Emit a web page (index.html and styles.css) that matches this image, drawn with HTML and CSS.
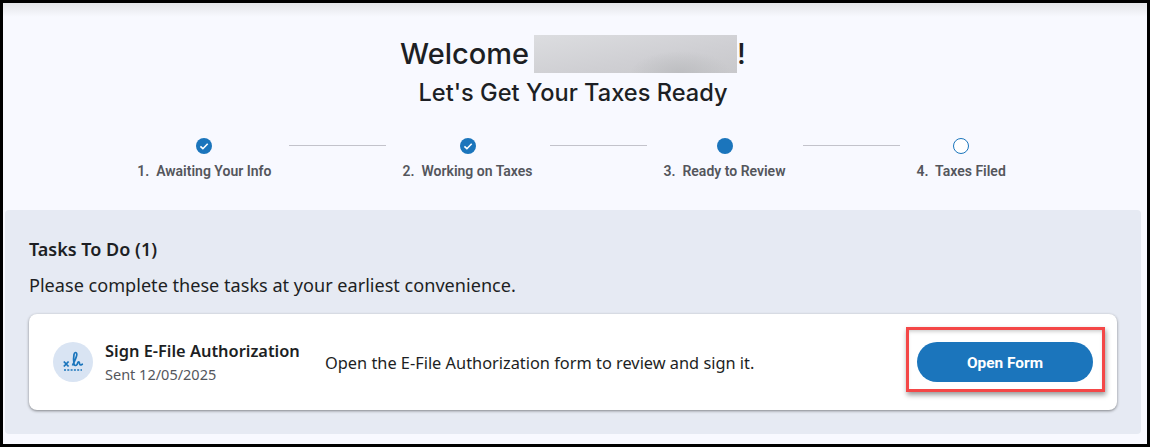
FILE: index.html
```html
<!DOCTYPE html>
<html lang="en">
<head>
    <meta charset="UTF-8">
    <title>Tax Portal</title>
    <link rel="stylesheet" href="styles.css">
</head>
<body>
    <div class="frame">
        <header class="welcome">
            <h1 class="welcome-title">Welcome <span class="name-blur"></span>!</h1>
            <h2 class="welcome-sub">Let's Get Your Taxes Ready</h2>

            <div class="stepper">
                <div class="step">
                    <svg class="step-icon" viewBox="0 0 16 16"><circle cx="8" cy="8" r="8" fill="#1b75bc"/><path d="M4.4 8.3l2.5 2.4 4.8-5" fill="none" stroke="#fff" stroke-width="1.6"/></svg>
                    <span class="step-label">1.&nbsp; Awaiting Your Info</span>
                </div>
                <div class="step-line"></div>
                <div class="step">
                    <svg class="step-icon" viewBox="0 0 16 16"><circle cx="8" cy="8" r="8" fill="#1b75bc"/><path d="M4.4 8.3l2.5 2.4 4.8-5" fill="none" stroke="#fff" stroke-width="1.6"/></svg>
                    <span class="step-label">2.&nbsp; Working on Taxes</span>
                </div>
                <div class="step-line"></div>
                <div class="step">
                    <svg class="step-icon" viewBox="0 0 16 16"><circle cx="8" cy="8" r="8" fill="#1b75bc"/></svg>
                    <span class="step-label">3.&nbsp; Ready to Review</span>
                </div>
                <div class="step-line"></div>
                <div class="step">
                    <svg class="step-icon" viewBox="0 0 16 16"><circle cx="8" cy="8" r="7.5" fill="#fff" stroke="#1b75bc"/></svg>
                    <span class="step-label">4.&nbsp; Taxes Filed</span>
                </div>
            </div>
        </header>

        <section class="tasks">
            <h3 class="tasks-title">Tasks To Do (1)</h3>
            <p class="tasks-note">Please complete these tasks at your earliest convenience.</p>

            <div class="task-card">
                <div class="task-icon">
                    <svg viewBox="0 0 24 24" width="24" height="24">
                        <path d="M2.8 11.500l4.800 5M7.600 11.500l-4.800 5" stroke="#1b75bc" stroke-width="1.800" fill="none"/>
                        <path d="M11.500 15.500C13 12 16 7 15.800 4.300C15.600 1.800 13.500 2 13 4.500C12.500 7 12.500 11 13 14C13.300 15.800 15 16 16 14.500C16.800 13 17 11.500 18 12C19 12.500 18 15 19.500 15C20.500 15 21 14.200 22 14" stroke="#1b75bc" stroke-width="1.700" fill="none"/>
                        <path d="M3 20h18" stroke="#1b75bc" stroke-width="1.600" stroke-dasharray="2 1.300" fill="none"/>
                    </svg>
                </div>
                <div class="task-info">
                    <div class="task-name">Sign E-File Authorization</div>
                    <div class="task-date">Sent 12/05/2025</div>
                </div>
                <p class="task-desc">Open the E-File Authorization form to review and sign it.</p>
                <div class="highlight-box">
                    <button class="form-button" type="button">Open Form</button>
                </div>
            </div>
        </section>
    </div>
</body>
</html>
```

FILE: styles.css
```css
:root {
    --page-bg: #f8f9ff;
    --panel-bg: #e6eaf3;
    --primary-blue: #1b75bc;
    --text-dark: #1d1f24;
    --text-gray: #54565c;
    --line-color: #c3c3cb;
    --red-mark: #f44747;
}
*, *::before, *::after { box-sizing: border-box; }
body { margin: 0; background-color: #000; overflow: hidden; }
.frame {
    height: 447px; border: 3px solid #000; background-color: var(--page-bg);
    display: flex; flex-direction: column;
    font-family: 'Noto Sans', sans-serif; color: var(--text-dark);
}
.welcome {
    height: 207px; flex-shrink: 0;
    background-image: linear-gradient(to bottom, #e4e5e9, var(--page-bg) 14px);
    display: flex; flex-direction: column; align-items: center;
    padding-top: 31px; padding-right: 4px;
}
.welcome-title { margin: 0; font-family: 'Inter', sans-serif; font-size: 29px; line-height: 40px; font-weight: 500; display: flex; align-items: center; }
.name-blur {
    display: block; width: 203px; height: 38px; margin-left: 5px;
    background:
        radial-gradient(ellipse 50px 22px at 72% 100%, #bdbec1, transparent),
        linear-gradient(170deg, #dcdde0, #cfcfd3 60%, #c8c8cb);
}
.welcome-sub { margin: 4px 0 0 0; font-family: 'Inter', sans-serif; font-size: 23.6px; line-height: 30px; font-weight: 500; }
.stepper { display: flex; align-items: flex-start; gap: 17px; margin-top: 30px; margin-right: 3px; }
.step { display: flex; flex-direction: column; align-items: center; gap: 8px; flex-shrink: 0; }
.step-icon { width: 16px; height: 16px; display: block; }
.step-label { font-family: 'Roboto', sans-serif; font-size: 14px; line-height: 18px; font-weight: 600; color: var(--text-gray); white-space: nowrap; }
.step-line { width: 97px; height: 1px; margin-top: 7px; background-color: var(--line-color); flex-shrink: 0; }
.tasks {
    flex: 1; background-color: var(--panel-bg); border-radius: 4px;
    margin: 0 6px 10px 2px; padding: 26px 24px 0 24px;
}
.tasks-title { margin: 0; font-size: 18px; line-height: 26px; font-weight: 600; }
.tasks-note { margin: 10px 0 0 0; font-size: 18.1px; line-height: 26px; }
.task-card {
    display: flex; align-items: center; height: 96px; margin-top: 16px;
    background-color: #fff; border-radius: 8px; box-shadow: 0 1px 3px rgba(0,0,0,0.45);
    padding-left: 24px; padding-right: 12px;
}
.task-icon {
    width: 40px; height: 40px; border-radius: 50%; background-color: #d9e4f3;
    display: flex; align-items: center; justify-content: center; flex-shrink: 0;
}
.task-info { margin-left: 12px; width: 220px; flex-shrink: 0; }
.task-name { font-size: 16.4px; line-height: 22px; font-weight: 600; }
.task-date { margin-top: 2px; font-size: 14.5px; line-height: 20px; color: var(--text-gray); }
.task-desc { margin: 0; padding-top: 2px; flex: 1; font-size: 16.35px; line-height: 22px; }
.highlight-box {
    width: 199px; height: 65px; border: 3px solid var(--red-mark);
    align-self: flex-start; margin-top: 13px; padding-top: 12px; padding-left: 8px;
    box-shadow: 1px 3px 5px rgba(0,0,0,0.4), inset 0 3px 4px -2px rgba(0,0,0,0.25);
}
.form-button {
    display: block; width: 176px; height: 40px; border: 0; border-radius: 20px;
    background-color: var(--primary-blue); color: #fff;
    font-family: 'Roboto', sans-serif; font-size: 15.4px; font-weight: 700; padding: 2px 0 0 0;
}
```
